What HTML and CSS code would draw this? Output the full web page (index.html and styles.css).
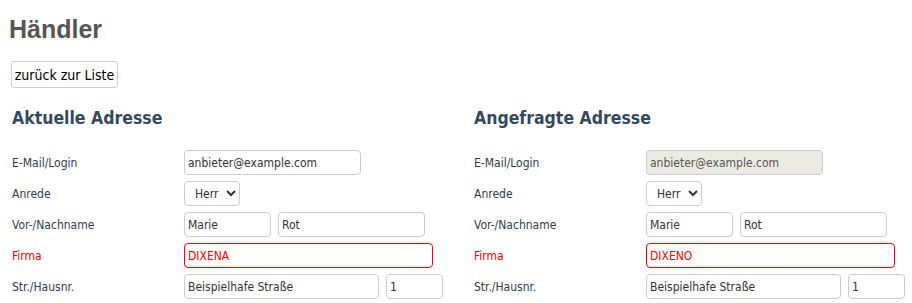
FILE: index.html
```html
<!DOCTYPE html>
<html lang="de">
<head>
  <meta charset="UTF-8" />
  <title>Händler</title>
  <link rel="stylesheet" href="styles.css">
</head>
<body>

  <h1>Händler</h1>

  <button class="btn-back">zurück zur Liste</button>

  <div class="adressen">

    <section class="adresse">
      <h2>Aktuelle Adresse</h2>
      <div class="zeile">
        <label>E-Mail/Login</label>
        <input class="f-mail" type="text" value="anbieter@example.com">
      </div>
      <div class="zeile">
        <label>Anrede</label>
        <select class="f-anrede"><option>Herr</option><option>Frau</option></select>
      </div>
      <div class="zeile">
        <label>Vor-/Nachname</label>
        <input class="f-vorname" type="text" value="Marie">
        <input class="f-nachname" type="text" value="Rot">
      </div>
      <div class="zeile geaendert">
        <label>Firma</label>
        <input class="f-firma" type="text" value="DIXENA">
      </div>
      <div class="zeile">
        <label>Str./Hausnr.</label>
        <input class="f-strasse" type="text" value="Beispielhafe Straße">
        <input class="f-nr" type="text" value="1">
      </div>
    </section>

    <section class="adresse">
      <h2>Angefragte Adresse</h2>
      <div class="zeile">
        <label>E-Mail/Login</label>
        <input class="f-mail" type="text" value="anbieter@example.com" disabled>
      </div>
      <div class="zeile">
        <label>Anrede</label>
        <select class="f-anrede"><option>Herr</option><option>Frau</option></select>
      </div>
      <div class="zeile">
        <label>Vor-/Nachname</label>
        <input class="f-vorname" type="text" value="Marie">
        <input class="f-nachname" type="text" value="Rot">
      </div>
      <div class="zeile geaendert">
        <label>Firma</label>
        <input class="f-firma" type="text" value="DIXENO">
      </div>
      <div class="zeile">
        <label>Str./Hausnr.</label>
        <input class="f-strasse" type="text" value="Beispielhafe Straße">
        <input class="f-nr" type="text" value="1">
      </div>
    </section>

  </div>

</body>
</html>
```

FILE: styles.css
```css
* {
  margin: 0;
  padding: 0;
  box-sizing: border-box;
}

body {
  font-family: "DejaVu Sans Condensed", "DejaVu Sans", sans-serif;
  font-stretch: condensed;
  background: #fff;
  color: #2c3e50;
  padding: 0 0 0 8px;
}

h1 {
  font-family: "Liberation Sans", Arial, sans-serif;
  font-stretch: normal;
  font-size: 25px;
  font-weight: bold;
  color: #555;
  padding-top: 14px;
  line-height: 30px;
  margin-left: 1px;
}

.btn-back {
  font-family: inherit;
  font-stretch: condensed;
  font-size: 14px;
  color: #000;
  background: #fff;
  border: 1px solid #ccc;
  border-radius: 3px;
  height: 27px;
  width: 107px;
  margin: 17px 0 0 3px;
}

.adressen {
  display: grid;
  grid-template-columns: 462px 1fr;
  padding-left: 4px;
  margin-top: 19px;
}

h2 {
  font-size: 17.5px;
  font-weight: bold;
  color: #34495e;
  line-height: 22px;
  margin-bottom: 21px;
}

.zeile {
  display: flex;
  align-items: center;
  gap: 7px;
  height: 25px;
  margin-bottom: 6px;
}

.zeile label {
  width: 165px;
  font-size: 12px;
  color: #2c3e50;
}

.geaendert label,
.geaendert input {
  color: #f00;
}

input,
select {
  font-family: inherit;
  font-stretch: condensed;
  font-size: 12px;
  color: #333;
  height: 25px;
  padding: 0 3px;
  border: 1px solid #ccc;
  border-radius: 4px;
  background: #fff;
}

input:disabled {
  background: #ebebe4;
  color: #555;
}

.geaendert input {
  border-color: #f00;
}

.f-mail { width: 177px; }
.f-anrede { width: 56px; padding-left: 6px; }
.f-vorname { width: 87px; }
.f-nachname { width: 147px; }
.f-firma { width: 249px; }
.f-strasse { width: 195px; }
.f-nr { width: 57px; }
```
